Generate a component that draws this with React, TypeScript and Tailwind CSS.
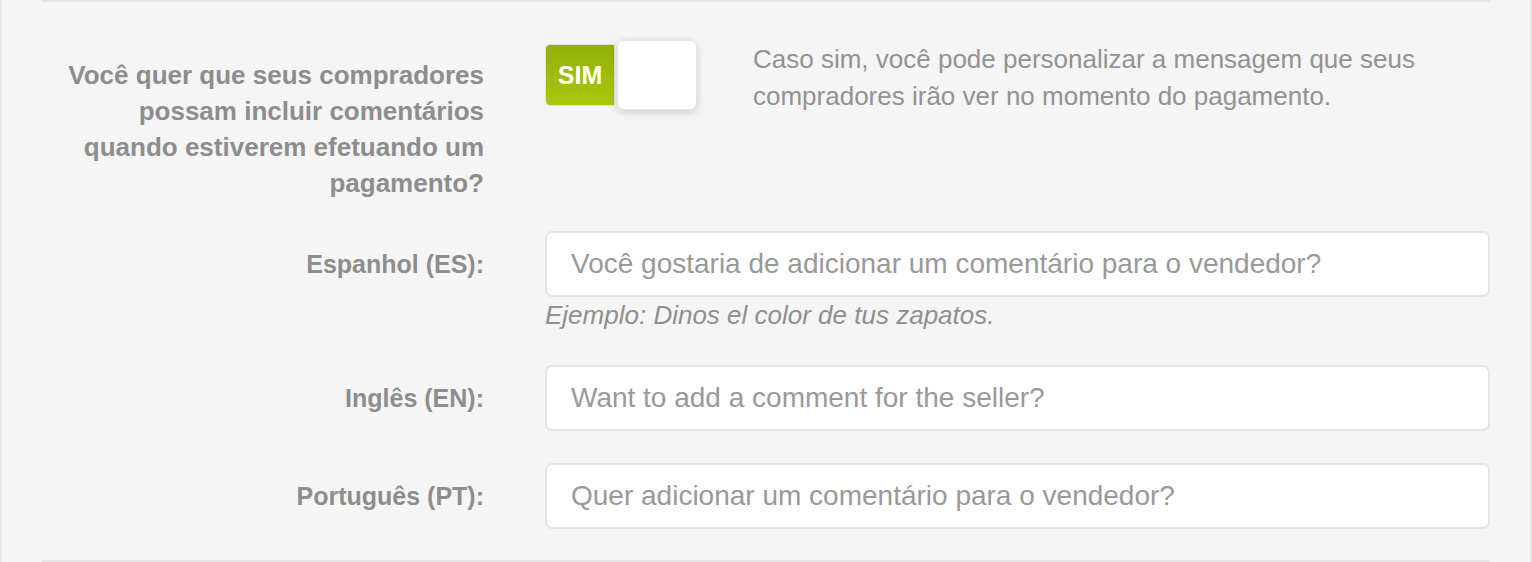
import React from 'react';

const font = { fontFamily: '"Liberation Sans", Arial, Helvetica, sans-serif' };

function Toggle() {
    return (
        <div className="flex items-center h-[70px]">
            <div className="w-[70px] h-[62px] rounded-l-[5px] border border-[#e2e2e2] bg-gradient-to-b from-[#93b00a] to-[#a9c80c] flex items-center justify-center">
                <span className="text-white font-bold text-[25px] leading-none">SIM</span>
            </div>
            <div className="ml-[2px] w-[80px] h-[70px] rounded-[7px] bg-white border border-[#e6e6e6] shadow-[0_2px_8px_rgba(0,0,0,0.18)]" />
        </div>
    );
}

function LangRow({ label, placeholder, hint }: { label: string; placeholder: string; hint?: string }) {
    return (
        <div className="flex">
            <div className="w-[442px] shrink-0 h-[66px] flex items-center justify-end">
                <span className="text-[25px] font-bold text-[#8d8d8d] leading-[36px]">{label}</span>
            </div>
            <div className="ml-[61px] flex-1">
                <input
                    type="text"
                    placeholder={placeholder}
                    className="w-full h-[66px] rounded-[7px] border-2 border-[#e4e4e4] bg-white pl-[24px] text-[28px] text-[#555] placeholder:text-[#999] outline-none"
                    style={font}
                />
                {hint && (
                    <p className="italic text-[26px] leading-[36px] text-[#8f8f8f]">{hint}</p>
                )}
            </div>
        </div>
    );
}

export default function App() {
    return (
        <div className="w-[1532px] h-[562px] bg-[#f5f5f5] border-l-2 border-r-2 border-[#e7e7e7] overflow-hidden" style={font}>
            <div className="mx-[40px] border-t-2 border-b-2 border-[#e6e6e6] h-[562px] pt-[38px]">
                <div className="flex">
                    <div className="w-[442px] shrink-0 pt-[17px] text-right">
                        <p className="text-[26px] font-bold text-[#8d8d8d] leading-[36px] pl-[10px]">
                            Você quer que seus compradores possam incluir comentários quando estiverem efetuando um pagamento?
                        </p>
                    </div>
                    <div className="ml-[61px] flex items-start">
                        <Toggle />
                        <p className="ml-[56px] mt-[1px] w-[690px] text-[26px] leading-[37px] text-[#929292]">
                            Caso sim, você pode personalizar a mensagem que seus compradores irão ver no momento do pagamento.
                        </p>
                    </div>
                </div>
                <div className="mt-[30px] flex flex-col gap-[32px]">
                    <LangRow
                        label="Espanhol (ES):"
                        placeholder="Você gostaria de adicionar um comentário para o vendedor?"
                        hint="Ejemplo: Dinos el color de tus zapatos."
                    />
                    <LangRow label="Inglês (EN):" placeholder="Want to add a comment for the seller?" />
                    <LangRow label="Português (PT):" placeholder="Quer adicionar um comentário para o vendedor?" />
                </div>
            </div>
        </div>
    );
}
